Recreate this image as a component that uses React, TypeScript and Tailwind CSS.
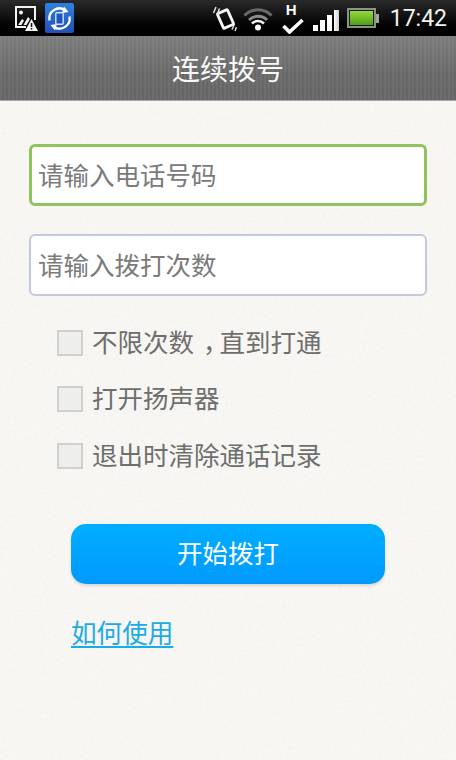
import React from 'react';

const cjk = "font-['Roboto','Noto_Sans_CJK_SC',sans-serif]";

const StatusBar: React.FC = () => (
  <div className="h-9 flex items-center pl-[14px] pr-[9px] bg-gradient-to-b from-[#2a2a2a] via-[#0e0e0e] to-[#000000]">
    {/* picture with warning */}
    <svg width="24" height="30" viewBox="0 0 24 30" aria-hidden="true">
      <path d="M12 24H2V4h19v13" fill="none" stroke="#f2f2f2" strokeWidth="2" />
      <circle cx="7" cy="9.500" r="2" fill="#f2f2f2" />
      <path d="M4 22l4-6 2 1.500L7.500 22zM9.500 22l4.500-8 2 2-3.500 6z" fill="#f2f2f2" />
      <path d="M17.500 16l6.500 12H11z" fill="#f5f5f5" />
      <rect x="16.800" y="20" width="1.500" height="4" fill="#111" />
      <rect x="16.800" y="25" width="1.500" height="1.500" fill="#111" />
    </svg>
    <div className="ml-[7px] w-[29px] h-[30px] rounded-[2px] bg-gradient-to-b from-[#2f82de] to-[#224eb6] flex items-center justify-center">
      <svg width="27" height="27" viewBox="0 0 27 27" aria-hidden="true">
        <path d="M3.500 15.500a10.200 10.200 0 0 1 15.500-10.500" fill="none" stroke="#fff" strokeWidth="2.300" />
        <path d="M23.500 11.500a10.200 10.200 0 0 1-15.500 10.500" fill="none" stroke="#fff" strokeWidth="2.300" />
        <path d="M18 1.500l4.500 5.500-6.500 1zM9 25.500l-4.500-5.500 6.500-1z" fill="#fff" />
        <rect x="9.800" y="7.800" width="7.400" height="11.400" rx="1" fill="#1f56bd" stroke="#cfe0f8" strokeWidth="1.400" />
      </svg>
    </div>
    <div className="flex-1" />
    {/* vibrate */}
    <svg width="25" height="28" viewBox="0 0 25 28" aria-hidden="true">
      <g transform="rotate(-24 13.500 15)">
        <rect x="8" y="7" width="11" height="16" rx="1" fill="none" stroke="#f5f5f5" strokeWidth="2.800" />
      </g>
      <path d="M1.500 9l2.500-6M5 11l2.500-6.500M20 25.500l2.500-5.500M23 27l1.500-4" stroke="#e0e0e0" strokeWidth="1.500" fill="none" />
    </svg>
    {/* wifi */}
    <svg className="ml-[6px]" width="30" height="26" viewBox="0 0 30 26" aria-hidden="true">
      <path d="M1.500 10.500a19 19 0 0 1 27 0" fill="none" stroke="#6a6a6a" strokeWidth="3" />
      <path d="M6 15a12.800 12.800 0 0 1 18 0" fill="none" stroke="#8a8a8a" strokeWidth="3" />
      <path d="M9 18.500a8.500 8.500 0 0 1 12 0" fill="none" stroke="#f5f5f5" strokeWidth="2.600" />
      <circle cx="15" cy="22.500" r="3" fill="#fff" />
    </svg>
    <div className="relative ml-[8px] w-[24px] h-[36px]">
      <span className="absolute left-[5px] top-[3px] text-[15px] leading-[14px] font-bold text-white font-['Liberation_Sans',sans-serif]">H</span>
      <svg className="absolute left-[1px] top-[18px]" width="22" height="16" viewBox="0 0 22 16" aria-hidden="true">
        <path d="M1.500 8l6 6L20.500 2" fill="none" stroke="#fff" strokeWidth="3.600" />
      </svg>
    </div>
    <div className="ml-[8px] self-end mb-[5px] flex items-end gap-[2px]">
      <div className="w-[5px] h-[6px] bg-white" />
      <div className="w-[5px] h-[11px] bg-white" />
      <div className="w-[5px] h-[16px] bg-white" />
      <div className="w-[5px] h-[21px] bg-gradient-to-r from-white to-[#cfcfcf]" />
    </div>
    <div className="ml-[8px] flex items-center">
      <div className="w-[29px] h-[20px] border-2 border-[#8d9287] p-[1px] bg-[#1a1a1a]">
        <div className="w-full h-full bg-gradient-to-b from-[#94d83c] to-[#4f9e14]" />
      </div>
      <div className="w-[3px] h-[9px] bg-[#a2a69c]" />
    </div>
    <span className={`ml-[11px] text-[23px] leading-none text-[#f2f2f2] ${cjk}`}>17:42</span>
  </div>
);

const CheckRow: React.FC<{ children: React.ReactNode }> = ({ children }) => (
  <label className="flex items-center h-[26px]">
    <span className="w-[26px] h-[26px] border-2 border-[#d0d0cd] bg-[#eeeeec]" />
    <span className={`ml-[9px] pt-[2px] text-[25.500px] leading-none text-[#6e6e6e] ${cjk}`}>{children}</span>
  </label>
);

export default function App() {
  return (
    <div className="w-[456px] h-[760px] flex flex-col overflow-hidden bg-[#f9f8f4]">
      <StatusBar />
      <div className="h-[65px] pt-[6px] flex items-center justify-center border-b border-[#a8a8a8] bg-[repeating-linear-gradient(90deg,rgba(255,255,255,0.03)_0px,rgba(255,255,255,0.03)_2px,rgba(0,0,0,0.03)_2px,rgba(0,0,0,0.03)_4px),linear-gradient(180deg,#7f7f7f,#6b6b6b_60%,#686868)]">
        <span className={`text-[28px] leading-none text-[#f8f8f8] ${cjk}`}>连续拨号</span>
      </div>
      <div className="relative flex-1">
        {/* paper grain of the page background */}
        <svg className="absolute inset-0 w-full h-full opacity-[0.07]" aria-hidden="true">
          <filter id="grain">
            <feTurbulence type="fractalNoise" baseFrequency="0.35" numOctaves="3" seed="4" />
            <feColorMatrix type="saturate" values="0" />
          </filter>
          <rect width="100%" height="100%" filter="url(#grain)" />
        </svg>
        <div className="relative flex flex-col px-[29px] pt-[43px]">
          <div className="h-[62px] rounded-[6px] border-[3px] border-[#8fc45c] bg-white flex items-center pl-[6px] pt-[4px]">
            <span className={`text-[25.500px] leading-none text-[#7a7a7a] ${cjk}`}>请输入电话号码</span>
          </div>
          <div className="mt-[28px] h-[62px] rounded-[6px] border-2 border-[#c3c8dc] bg-white flex items-center pl-[7px] pt-[4px]">
            <span className={`text-[25.500px] leading-none text-[#7a7a7a] ${cjk}`}>请输入拨打次数</span>
          </div>
          <div className="mt-[34px] pl-[28px] flex flex-col gap-[30px]">
            <CheckRow>
              不限次数<span className="pl-[9px] tracking-[-9px]">，</span>直到打通
            </CheckRow>
            <CheckRow>打开扬声器</CheckRow>
            <div className="mt-[1px]">
              <CheckRow>退出时清除通话记录</CheckRow>
            </div>
          </div>
          <button className={`mt-[55px] ml-[42px] w-[314px] h-[60px] pt-[2px] rounded-[15px] bg-gradient-to-b from-[#00aeff] to-[#0099ff] shadow-[0_2px_3px_rgba(0,0,0,0.12)] text-[25.500px] leading-none text-white ${cjk}`}>
            开始拨打
          </button>
          <a className={`mt-[38px] ml-[42px] w-fit text-[25.600px] leading-none text-[#1cabea] underline underline-offset-[3px] ${cjk}`}>如何使用</a>
        </div>
      </div>
    </div>
  );
}
